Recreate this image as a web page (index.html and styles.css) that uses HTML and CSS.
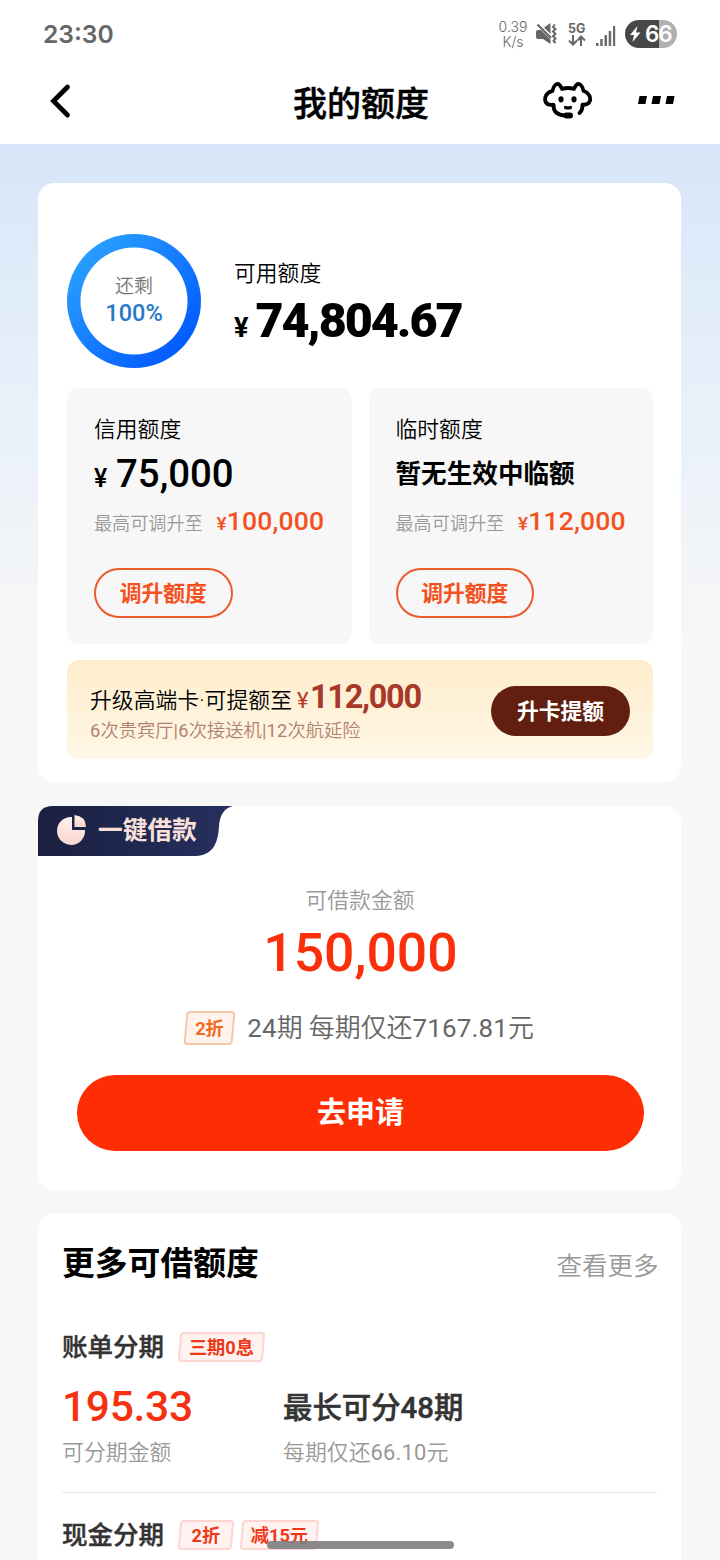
FILE: index.html
```html
<!DOCTYPE html>
<html lang="zh-CN">
<head>
<meta charset="utf-8">
<title>我的额度</title>
<link rel="stylesheet" href="styles.css">
</head>
<body>
<header class="top">
  <div class="status">
    <span class="clock">23:30</span>
    <div class="status-right">
      <span class="speed">0.39<br>K/s</span>
      <svg class="mute" width="22" height="22" viewBox="0 0 22 22" fill="#666">
        <path d="M0 9q0-2 2-2h3l9.500 9.500V21L7 16H2q-2 0-2-2zM8 4.500 14.500 0v11z"/>
        <path d="M1.500 1.500 15 15" stroke="#666" stroke-width="2.200" fill="none"/>
        <path d="m19 1.500-2 2.500 2.500 2L17 8.500l2.500 2.500-2.500 2 2.500 2.500-2 2.500 2 2" stroke="#666" stroke-width="2" fill="none"/>
      </svg>
      <div class="net"><span>5G</span>
        <svg width="18" height="11" viewBox="0 0 18 11" fill="none" stroke="#666" stroke-width="2"><path d="M5 0v9M1 5.500 5 9.500l4-4M13 11V2M9.500 5.500l3.500-4 4 4"/></svg>
      </div>
      <svg class="signal" width="20" height="20" viewBox="0 0 20 20" fill="#6c6c6c"><path d="M0 17h2.500v3H0zM4.200 13h2.500v7H4.200zM8.500 9H11v11H8.500zM12.700 5h2.500v15h-2.500zM17 0h2.200v20H17z"/></svg>
      <div class="battery">
        <svg width="11" height="16" viewBox="0 0 11 16" fill="#fff"><path d="M7.500 0 0 9h4L2.500 16 10.500 6.500H6z"/></svg><span>66</span>
      </div>
    </div>
  </div>
  <nav class="nav">
    <svg class="back" width="24" height="36" viewBox="0 0 24 36" fill="none" stroke="#000" stroke-width="4.800" stroke-linecap="round"><path d="M18.500 4 4.500 18l14 14"/></svg>
    <h1>我的额度</h1>
    <svg class="cow" width="50" height="38" viewBox="0 0 50 38" fill="none" stroke="#000" stroke-width="3.800" stroke-linecap="round" stroke-linejoin="round">
      <path d="M10.500 23.500c0 6 3.500 9.500 11 10M39.500 23.500c0 3.500-.5 5.500-3 7.500"/>
      <path d="M10.500 22.700C2 24 1 18 3 13.500 5 10 8 9.500 9.500 9c1-5 3.500-7.500 6-7C17.500 3 18 5 19 7q6-2 12 0c1-2 1.500-4 3.500-5 2.500-.5 5 2 6 7 3 .5 4.500 2 6 5 2 5-.5 9-7 8.700"/>
      <ellipse cx="18" cy="17.300" rx="2.600" ry="3.100" fill="#000" stroke="none"/><ellipse cx="31" cy="17.300" rx="2.600" ry="3.100" fill="#000" stroke="none"/>
      <path d="M22.500 25.500q2.500 1 5 0" stroke-width="3.200"/><rect x="20.500" y="30.500" width="9.500" height="6" rx="3" fill="#000" stroke="none"/>
    </svg>
    <svg class="more" width="37" height="8" viewBox="0 0 37 8"><path d="M1.500 0H9L7.500 8H0zM15 0h8l-1.500 8h-8zM29 0h7.500L35 8h-7.500z"/></svg>
  </nav>
</header>
<main class="page">
  <section class="card quota">
    <div class="summary">
      <div class="ring"><span class="ring-label">还剩</span><span class="ring-value">100%</span></div>
      <div class="avail">
        <div class="label">可用额度</div>
        <div class="total"><span class="yen">¥</span><b>74,804.67</b></div>
      </div>
    </div>
    <div class="boxes">
      <div class="box">
        <div class="label">信用额度</div>
        <div class="amount"><span class="yen">¥</span><span>75,000</span></div>
        <div class="raise"><span class="hint">最高可调升至</span><span class="yen">¥</span><span class="num">100,000</span></div>
        <button class="outline">调升额度</button>
      </div>
      <div class="box">
        <div class="label">临时额度</div>
        <div class="amount none">暂无生效中临额</div>
        <div class="raise"><span class="hint">最高可调升至</span><span class="yen">¥</span><span class="num">112,000</span></div>
        <button class="outline">调升额度</button>
      </div>
    </div>
    <div class="promo">
      <div class="promo-text">
        <div class="promo-title"><span>升级高端卡·可提额至</span><span class="yen">¥</span><b>112,000</b></div>
        <div class="promo-sub"><span class="n">6</span>次贵宾厅<span class="n">|6</span>次接送机<span class="n">|12</span>次航延险</div>
      </div>
      <button class="upgrade">升卡提额</button>
    </div>
  </section>
  <section class="card loan">
    <div class="tag">
      <svg class="tag-bg" width="196" height="50" viewBox="0 0 196 50"><defs><linearGradient id="navy"><stop stop-color="#1b2040"/><stop offset="1" stop-color="#26305f"/></linearGradient><linearGradient id="pie" x2="0" y2="1"><stop stop-color="#fff1ed"/><stop offset="1" stop-color="#f8d6cd"/></linearGradient></defs><path fill="url(#navy)" d="M0 50V15Q0 0 15 0h180c-9 2-13 9-14 20-1 19-7 29-23 30z"/></svg>
      <svg class="pie" width="29" height="30" viewBox="0 0 29 30" fill="url(#pie)"><path d="M15 2v13h13A14 14 0 1 1 15 2z"/><path d="M17.500 0q11 1 11.500 12H17.500z"/></svg>
      <span>一键借款</span>
    </div>
    <div class="loan-label">可借款金额</div>
    <div class="loan-amount">150,000</div>
    <div class="loan-plan"><span class="badge orange"><i>2折</i></span><span class="plan-text"><span class="n">24</span>期 每期仅还<span class="n">7167.81</span>元</span></div>
    <button class="apply">去申请</button>
  </section>
  <section class="card more-quota">
    <div class="more-head"><h2>更多可借额度</h2><a>查看更多</a></div>
    <article class="item">
      <div class="item-title"><h3>账单分期</h3><span class="badge b3"><i>三期0息</i></span></div>
      <div class="item-cols">
        <div><div class="item-num">195.33</div><div class="item-sub">可分期金额</div></div>
        <div><div class="item-term">最长可分48期</div><div class="item-sub">每期仅还<span class="n">66.10</span>元</div></div>
      </div>
    </article>
    <article class="item second">
      <div class="item-title"><h3>现金分期</h3><span class="badge"><i>2折</i></span><span class="badge b2"><i>减15元</i></span></div>
    </article>
  </section>
</main>
<div class="home-bar"></div>
</body>
</html>
```
FILE: styles.css
```css
* { box-sizing: border-box; margin: 0; padding: 0; }
body {
  width: 720px; height: 1560px; overflow: hidden; position: relative;
  background: #f7f7f7; color: #000; white-space: nowrap;
  font-family: Roboto, "Noto Sans CJK SC", sans-serif;
}
button { font: inherit; border: 0; display: block; }
svg { display: block; flex: none; }
i { font-style: normal; }
.n { font-weight: 400; letter-spacing: .2px; }

.top { height: 144px; background: #fff; }
.status { height: 68px; display: flex; justify-content: space-between; padding: 0 43px; color: #666; font-family: Inter, sans-serif; }
.clock { font-size: 24.600px; font-weight: 600; line-height: 69px; }
.status-right { display: flex; align-items: center; height: 68px; }
.speed { font-size: 14px; line-height: 15px; text-align: center; font-weight: 300; width: 30px; }
.mute { margin-left: 8px; }
.net { width: 20px; margin: 0 0 0 10px; font-size: 12.500px; font-weight: 700; line-height: 13px; }
.signal { margin: 4px 0 0 8px; }
.battery { width: 52px; height: 28px; margin-left: 9px; border-radius: 14px; display: flex; align-items: center; padding-left: 5px; gap: 4px; color: #fff; background: linear-gradient(90deg, #484848 66%, #b0b0b0 66%); font-size: 22.500px; font-weight: 600; line-height: 28px; letter-spacing: -1.200px; }
.nav { height: 76px; display: flex; align-items: flex-start; }
.back { margin: 15px 0 0 49px; }
.nav h1 { flex: 1; font-size: 34px; font-weight: 500; -webkit-text-stroke: .5px #000; line-height: 50px; margin-top: 11px; padding-left: 220px; }
.cow { margin: 14px 0 0 -1px; }
.more { margin: 28px 45px 0 45px; }

.page { height: 1416px; padding: 39px 39px 0 38px; background: linear-gradient(#d6e6f8, #e6effa 220px, #f7f7f7 500px); }
.card { background: #fff; border-radius: 16px; }
.quota { height: 599px; padding: 51px 28px 0 29px; }
.summary { display: flex; }
.ring { width: 134px; height: 134px; border-radius: 50%; padding-top: 40px; text-align: center; background: radial-gradient(circle, #fff 53px, transparent 54px), linear-gradient(135deg, #2ba2ff 10%, #0057ff 90%); display: flex; flex-direction: column; }
.ring-label { font-size: 19px; line-height: 26px; color: #777; font-weight: 350; }
.ring-value { font-size: 23.500px; line-height: 27px; color: #2878c8; font-weight: 500; }
.avail { margin: 25px 0 0 33px; }
.label { font-size: 21.800px; line-height: 30px; font-weight: 350; }
.total { margin-top: 4px; height: 56px; display: flex; align-items: baseline; line-height: 56px; font-size: 48.500px; font-weight: 700; letter-spacing: -2.050px; }
.total .yen { font-size: 27px; width: 21.500px; letter-spacing: 0; }
.boxes { display: flex; justify-content: space-between; margin-top: 20px; }
.box { width: 284.500px; height: 256px; border-radius: 12px; background: #f7f7f7; padding: 26px 0 0 27px; }
.amount { margin-top: 7px; height: 46px; line-height: 46px; display: flex; align-items: baseline; font-size: 38.400px; font-weight: 500; }
.amount .yen { font-size: 25px; width: 22px; }
.amount.none { font-size: 25.600px; font-weight: 700; line-height: 46px; }
.raise { margin-top: 7px; height: 34px; line-height: 34px; display: flex; align-items: baseline; color: #f4511e; font-size: 26.500px; font-weight: 500; letter-spacing: .15px; }
.raise .hint { font-size: 18.100px; color: #999; font-weight: 350; width: 122.500px; letter-spacing: 0; }
.raise .yen { font-size: 19px; }
.outline { margin-top: 29.500px; width: 138.500px; height: 50px; border: 2px solid #ed5a29; border-radius: 25px; background: none; color: #f4511e; font-size: 21.800px; font-weight: 700; line-height: 48px; }
.box .label { line-height: 31px; height: 30px; }
.promo { margin-top: 16px; height: 99px; border-radius: 12px; background: linear-gradient(#feedcc, #fff7e6); display: flex; justify-content: space-between; padding: 17px 23px 0 23px; }
.promo-title { height: 40px; line-height: 40px; display: flex; align-items: baseline; font-size: 21.850px; font-weight: 350; }
.promo-title .yen { color: #b33424; width: 13px; margin-left: 5px; font-weight: 400; }
.promo-title b { font-size: 32.500px; letter-spacing: -1.300px; color: #a8382a; }
.promo-sub { font-size: 18.300px; line-height: 27px; color: #b18271; font-weight: 350; }
.upgrade { margin-top: 9px; width: 139px; height: 50px; border-radius: 25px; background: #621f10; color: #fff; font-size: 21.800px; font-weight: 700; line-height: 52px; }

.loan { margin-top: 24px; height: 384px; text-align: center; }
.tag { position: relative; width: 196px; height: 50px; display: flex; padding: 9px 0 0 19px; }
.tag-bg { position: absolute; left: 0; top: 0; }
.pie, .tag span { position: relative; }
.tag span { margin: -1px 0 0 12px; font-size: 24.700px; line-height: 34px; font-weight: 700; color: #fae0da; }
.loan-label { margin-top: 28px; padding-left: 1px; font-size: 21.800px; line-height: 33px; height: 32px; color: #999; font-weight: 350; }
.loan-amount { margin-top: 5px; padding-left: 2px; font-size: 53.500px; line-height: 64px; font-weight: 500; color: #f9300a; }
.loan-plan { margin-top: 24px; height: 36px; display: flex; justify-content: center; gap: 13px; color: #666; }
.plan-text { font-size: 25.900px; line-height: 38px; font-weight: 350; }
.apply { margin: 30px 0 0 39px; width: 567px; height: 76px; border-radius: 38px; background: #ff2d03; color: #fff; font-size: 29px; font-weight: 700; line-height: 76px; }
.badge { width: 54px; height: 30px; transform: skewX(-5deg); border: 2px solid #fcd5d0; border-radius: 4px; background: #fff2f0; color: #ee3817; font-size: 18.200px; font-weight: 700; line-height: 28px; text-align: center; }
.badge i { display: block; transform: skewX(5deg); }
.badge.orange { width: 49px; height: 34px; margin-top: 2px; border-color: #f5c9a8; background: #fff3ec; color: #f1691d; line-height: 31px; }

.more-quota { margin-top: 23px; height: 400px; padding: 0 24px; border-radius: 16px 16px 0 0; }
.more-head { display: flex; justify-content: space-between; padding-top: 26px; }
.more-head h2 { font-size: 32.800px; line-height: 50px; font-weight: 700; }
.more-head a { font-size: 25.500px; line-height: 54px; height: 50px; margin-right: -1.500px; color: #999; font-weight: 350; }
.item-title { display: flex; align-items: center; height: 36px; margin-top: 40px; }
.item-title h3 { font-size: 25.500px; line-height: 36px; font-weight: 500; -webkit-text-stroke: .4px #333; width: 117px; color: #333; }
.b3 { width: 85px; }
.b2 { width: 77px; margin-left: 8px; }
.item-cols { display: flex; margin-top: 13px; height: 115px; border-bottom: 1px solid #e8e8e8; }
.item-cols > div { width: 221px; }
.item-num { font-size: 42.500px; letter-spacing: -.3px; line-height: 58px; height: 60px; font-weight: 500; color: #f53110; }
.item-term { font-size: 29.400px; line-height: 60px; height: 60px; font-weight: 500; -webkit-text-stroke: .5px #333; color: #333; }
.item-sub { margin-top: -1px; font-size: 21.900px; line-height: 32px; color: #999; font-weight: 350; }
.second .item-title { margin-top: 24px; }
.home-bar { position: absolute; left: 267px; top: 1541px; width: 187px; height: 8px; border-radius: 4px; background: rgba(125, 125, 125, .9); }
```
